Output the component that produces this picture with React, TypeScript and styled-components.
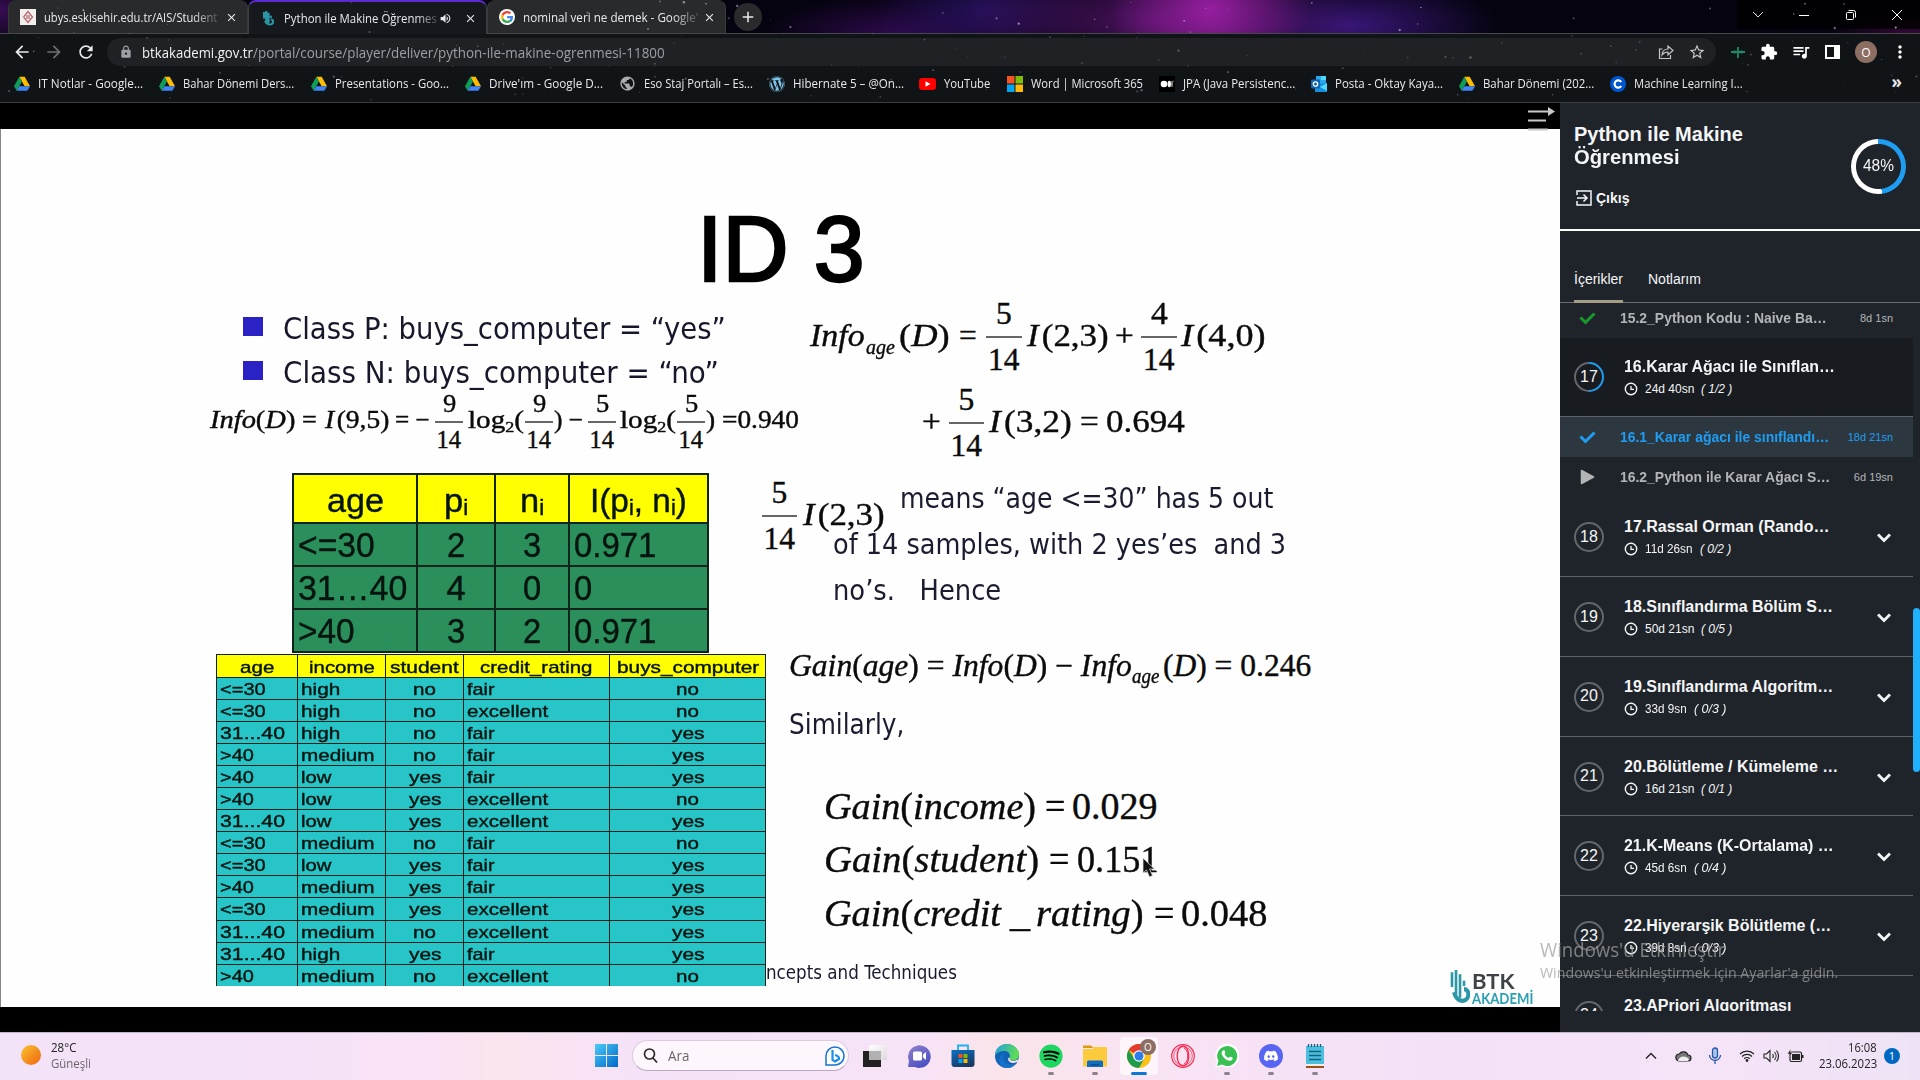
import React, { useLayoutEffect, useRef, useState } from 'react';
import styled, { createGlobalStyle } from 'styled-components';
import {
  MdArrowBack, MdArrowForward, MdRefresh, MdLock, MdStarBorder, MdExtension, MdQueueMusic,
  MdMoreVert, MdVolumeUp, MdClose, MdAdd, MdPublic,
} from 'react-icons/md';
import { FaSpotify, FaDiscord, FaWordpress } from 'react-icons/fa';

const UI = '"Open Sans", "Noto Sans", sans-serif';
const ARIAL = '"Liberation Sans", Arial, sans-serif';
const TIMES = '"Liberation Serif", "Times New Roman", serif';
const TAHOMA = '"DejaVu Sans Condensed", "DejaVu Sans", sans-serif';

const Global = createGlobalStyle`
  * { box-sizing: border-box; }
  body { margin: 0; background: #000; overflow: hidden; font-family: ${ARIAL}; }
  svg { display: block; flex: none; }
`;

/* ---------- text fitted to a fixed measure ---------- */
const FitBox = styled.span<{ $w: number }>`
  display: inline-block; flex: none; width: ${p => p.$w}px; white-space: pre; text-align: left;
`;
const FitInner = styled.span`display: inline-block; transform-origin: 0 50%;`;
function Fit({ w, children }: { w: number; children: React.ReactNode }) {
  const ref = useRef<HTMLSpanElement>(null);
  const [k, setK] = useState(1);
  useLayoutEffect(() => {
    if (ref.current) setK(w / ref.current.offsetWidth);
  }, [w]);
  return (
    <FitBox $w={w}><FitInner ref={ref} style={{ transform: `scaleX(${k})` }}>{children}</FitInner></FitBox>
  );
}

const Screen = styled.div`width: 1920px; height: 1080px; display: flex; flex-direction: column; overflow: hidden;`;

/* ---------- browser chrome ---------- */
const Browser = styled.header`
  position: relative; height: 103px; display: flex; flex-direction: column; color: #e8eaed;
  font-family: ${UI}; border-bottom: 1px solid #3c3d3f; background: #111417;
`;
const Stars = styled.svg`position: absolute; inset: 0; pointer-events: none;`;
const Strip = styled.div`
  height: 34px; display: flex; align-items: flex-start; border-bottom: 1px solid #47484b; padding-left: 8px;
  background:
    radial-gradient(ellipse 100px 80px at 1210px 10px, rgba(150,30,160,1), transparent),
    radial-gradient(ellipse 200px 60px at 1160px 20px, rgba(88,20,110,.85), transparent),
    radial-gradient(ellipse 150px 50px at 1350px 26px, rgba(62,24,130,.9), transparent),
    radial-gradient(ellipse 110px 50px at 985px 10px, rgba(40,18,100,.85), transparent),
    radial-gradient(ellipse 140px 40px at 900px 34px, rgba(50,10,84,.9), transparent),
    radial-gradient(ellipse 60px 40px at 0px 10px, rgba(60,14,90,.9), transparent),
    radial-gradient(ellipse 80px 20px at 1910px 34px, rgba(66,10,66,.8), transparent),
    #05030f;
`;
const Tab = styled.div<{ $active?: boolean; $w: number }>`
  width: ${p => p.$w}px; height: ${p => (p.$active ? 34 : 33)}px; display: flex; align-items: center;
  padding: 0 9px 0 11px; border-radius: 8px 8px 0 0; font-size: 12px;
  background: ${p => (p.$active ? '#15191d' : '#292a2b')};
  border: 1px solid ${p => (p.$active ? '#3d3e41' : '#3a3a3b')}; border-bottom: 0;
  border-top: ${p => (p.$active ? '2px solid #5b2ad0' : '1px solid #2b2b2c')};
`;
const TabText = styled.div<{ $w: number }>`
  width: ${p => p.$w}px; margin-left: 8px; overflow: hidden; flex: none;
  mask-image: linear-gradient(90deg, #000 85%, rgba(0,0,0,.15));
`;
const LeafSlot = styled.span`width: 16px; padding-left: 3px;`;
const Push = styled.div`margin-left: auto; display: flex; align-items: center; gap: 6px;`;
const NewTab = styled.div`
  width: 28px; height: 28px; margin: 3px 0 0 8px; border-radius: 50%; background: #2a2a2c;
  display: flex; align-items: center; justify-content: center;
`;
const WinButtons = styled.div`
  margin-left: auto; width: 183px; height: 29px; display: flex; align-items: center; justify-content: space-between;
  padding: 0 17px 0 15px; background: rgba(0,0,0,.75);
`;
const Toolbar = styled.div`height: 36px; display: flex; align-items: center; padding: 0 0 0 12px;`;
const NavIcons = styled.div`display: flex; gap: 12px; width: 95px; font-size: 20px;`;
const Omnibox = styled.div`
  width: 1609px; height: 28px; border-radius: 14px; background: #202124; display: flex; align-items: center;
  padding: 0 10px 0 12px; font-size: 14px; flex: none;
`;
const UrlText = styled.div`display: flex; margin-left: 9px; color: #9aa0a6;`;
const Host = styled.span`color: #f1f3f4;`;
const OmniTools = styled.div`margin-left: auto; display: flex; gap: 14px; align-items: center; color: #c4c7ca; font-size: 18px;`;
const Tools = styled.div`display: flex; align-items: center; margin-left: 13px; gap: 13px; font-size: 20px; color: #fff;`;
const Avatar = styled.div`
  width: 22px; height: 22px; border-radius: 50%; background: #8d6e63; color: #fff; font-size: 12px;
  display: flex; align-items: center; justify-content: center;
`;
const Bookmarks = styled.div`height: 32px; display: flex; align-items: center; padding: 0 0 5px 14px; font-size: 12px;`;
const Bookmark = styled.div<{ $gap: number }>`display: flex; align-items: center; gap: 8px; margin-right: ${p => p.$gap}px; flex: none;`;
const More = styled.div`margin: -4px 18px 0 auto; font-size: 17px; font-weight: 700;`;

const stars = Array.from({ length: 150 }, (_, i) => {
  const r = (n: number) => { const v = Math.sin(i * 12.9898 + n * 78.233) * 43758.5453; return v - Math.floor(v); };
  return { x: r(1) * 1920, y: r(2) * 100, s: 0.4 + r(3) * 0.8, o: 0.25 + r(4) * 0.55 };
});

const Drive = () => (
  <svg width="16" height="15" viewBox="0 0 24 22">
    <path d="M8 1h8l8 14h-8z" fill="#fbbc04" /><path d="M8 1l4 7-8 14-4-7z" fill="#0f9d58" />
    <path d="M8 15h16l-4 7H4z" fill="#4285f4" />
  </svg>
);
const Microsoft = () => (
  <svg width="16" height="16" viewBox="0 0 16 16">
    <path d="M0 0h7.5v7.5H0z" fill="#f35325" /><path d="M8.5 0H16v7.5H8.5z" fill="#81bc06" />
    <path d="M0 8.500h7.500V16H0z" fill="#05a6f0" /><path d="M8.500 8.500H16V16H8.500z" fill="#ffba08" />
  </svg>
);
const YouTube = () => (
  <svg width="17" height="12" viewBox="0 0 17 12"><rect width="17" height="12" rx="3" fill="#f00" /><path d="M6.500 3.200v5.600L11.500 6z" fill="#fff" /></svg>
);
const Medium = () => (
  <svg width="16" height="16" viewBox="0 0 16 16"><path d="M0 0h16v16H0z" fill="#000" /><circle cx="5" cy="8" r="3.300" fill="#fff" /><ellipse cx="10.300" cy="8" rx="1.700" ry="3.200" fill="#fff" /><path d="M13 5.200v5.600" stroke="#fff" /></svg>
);
const Outlook = () => (
  <svg width="16" height="16" viewBox="0 0 16 16"><path d="M5 0h10v8H5z" fill="#28a8ea" /><path d="M10 0h5v4h-5z" fill="#50d9ff" /><path d="M4 8l12-1v9H4z" fill="#1490df" /><path d="M16 7v8l-7-4z" fill="#50d9ff" /><rect y="3.500" width="9" height="9" rx="1" fill="#0f64b5" /><circle cx="4.500" cy="8" r="2.200" fill="none" stroke="#fff" strokeWidth="1.300" /></svg>
);
const Coursera = () => (
  <svg width="16" height="16" viewBox="0 0 16 16"><circle cx="8" cy="8" r="8" fill="#0056d2" /><path d="M11.200 6A3.600 3.600 0 1 0 11.200 10" fill="none" stroke="#fff" strokeWidth="2.200" /></svg>
);
const Google = () => (
  <svg width="16" height="16" viewBox="0 0 48 48"><circle cx="24" cy="24" r="24" fill="#fff" />
    <path fill="#4285f4" d="M42 24.500c0-1.500-.1-2.600-.4-3.800H24.400v7h10c-.2 1.700-1.300 4.300-3.700 6l5.700 4.500c3.400-3.200 5.600-7.900 5.600-13.700z" />
    <path fill="#34a853" d="M24.400 42c4.900 0 9.100-1.600 12-4.400l-5.700-4.400c-1.500 1.100-3.600 1.800-6.300 1.800-4.800 0-8.800-3.200-10.300-7.500l-6 4.600C11 38.100 17.200 42 24.400 42z" />
    <path fill="#fbbc05" d="M14.100 27.500c-.4-1.100-.6-2.300-.6-3.500s.2-2.400.6-3.500l-6-4.600c-1.300 2.400-2 5.200-2 8.100s.7 5.700 2 8.100z" />
    <path fill="#ea4335" d="M24.400 13c3.400 0 5.700 1.500 7 2.700l5.100-5C33.400 7.800 29.300 6 24.400 6c-7.200 0-13.400 4.100-16.300 10l6 4.600c1.500-4.400 5.500-7.600 10.300-7.600z" />
  </svg>
);
const Crest = () => (
  <svg width="16" height="16" viewBox="0 0 16 16"><path d="M0 0h16v16H0z" fill="#f1efee" /><path d="M8 2.500l4.500 5.500L8 13.500 3.500 8z" fill="none" stroke="#b5656b" strokeWidth="1.300" /><path d="M6 7h4M6 9h4" stroke="#a8434b" /></svg>
);
const Leaf = ({ w, h, thick }: { w: number; h: number; thick?: boolean }) => (
  <svg width={w} height={h} viewBox="0 0 20 34" preserveAspectRatio="none">
    <g fill="none" stroke="#2b97a6" strokeWidth={thick ? 4 : 2.600}>
      <path d="M2 4v14M6 2v24M10 6v22" /><path d="M14 12v5" /><path d="M14 20c6 0 6 10-1 11-5 0-8-4-9-8" strokeWidth="4" />
    </g>
  </svg>
);

const bookmarks: [React.ReactNode, string, number, number][] = [
  [<Drive />, 'IT Notlar - Google...', 105, 16], [<Drive />, 'Bahar Dönemi Ders...', 111, 17],
  [<Drive />, 'Presentations - Goo...', 114, 16], [<Drive />, "Drive'ım - Google D...", 114, 16],
  [<MdPublic size={17} color="#a9abb0" />, 'Eso Staj Portalı – Es...', 109, 16],
  [<FaWordpress size={16} color="#7cc3ea" />, 'Hibernate 5 – @On...', 111, 15],
  [<YouTube />, 'YouTube', 46, 17], [<Microsoft />, 'Word | Microsoft 365', 112, 16],
  [<Medium />, 'JPA (Java Persistenc...', 112, 16], [<Outlook />, 'Posta - Oktay Kaya...', 108, 16],
  [<Drive />, 'Bahar Dönemi (202...', 111, 16], [<Coursera />, 'Machine Learning I...', 109, 0],
];

function BrowserChrome() {
  return (
    <Browser>
      <Strip>
        <Tab $w={240}><Crest /><TabText $w={175}><Fit w={173}>ubys.eskisehir.edu.tr/AIS/Student</Fit></TabText><Push><MdClose size={13} /></Push></Tab>
        <Tab $w={239} $active><LeafSlot><Leaf w={11} h={16} thick /></LeafSlot><TabText $w={155}><Fit w={153}>Python ile Makine Öğrenmes</Fit></TabText><Push><MdVolumeUp size={13} /><i /><MdClose size={13} /></Push></Tab>
        <Tab $w={239}><Google /><TabText $w={176}><Fit w={175}>nominal veri ne demek - Google'</Fit></TabText><Push><MdClose size={13} /></Push></Tab>
        <NewTab><MdAdd size={18} /></NewTab>
        <WinButtons>
          <svg width="12" height="12" viewBox="0 0 12 12"><path d="M1 3l5 5 5-5" fill="none" stroke="#ddd" /></svg>
          <svg width="12" height="12" viewBox="0 0 12 12"><path d="M1 6.500h10" stroke="#fff" /></svg>
          <svg width="12" height="12" viewBox="0 0 12 12"><rect x="1.500" y="3.500" width="7" height="7" rx="1" fill="none" stroke="#fff" /><path d="M3.500 1.500h5a2 2 0 0 1 2 2v5" fill="none" stroke="#fff" /></svg>
          <svg width="12" height="12" viewBox="0 0 12 12"><path d="M1 1l10 10M11 1L1 11" stroke="#fff" /></svg>
        </WinButtons>
      </Strip>
      <Toolbar>
        <NavIcons><MdArrowBack /><MdArrowForward color="#6d7073" /><MdRefresh /></NavIcons>
        <Omnibox>
          <MdLock size={14} color="#9aa0a6" />
          <UrlText><Host><Fit w={111}>btkakademi.gov.tr</Fit></Host><Fit w={412}>/portal/course/player/deliver/python-ile-makine-ogrenmesi-11800</Fit></UrlText>
          <OmniTools>
            <svg width="16" height="16" viewBox="0 0 16 16" fill="none" stroke="#c4c7ca" strokeWidth="1.200"><path d="M4.500 5H1.500v9.500h11V11" /><path d="M4 11c.5-4 3-6 6-6V2l5 4.500-5 4.500V8C7.500 8 5.500 9 4 11z" /></svg>
            <MdStarBorder />
          </OmniTools>
        </Omnibox>
        <Tools>
          <svg width="18" height="18" viewBox="0 0 18 18" stroke="#1f8a68" strokeWidth="1.800"><path d="M9 4v11M2 9h14M5.500 7.500v3M12.500 7.500v3" /></svg>
          <MdExtension size={18} /><MdQueueMusic />
          <svg width="18" height="16" viewBox="0 0 18 16"><rect x="2" y="2" width="13" height="12" fill="none" stroke="#fff" strokeWidth="2" /><path d="M10 2h5v12h-5z" fill="#fff" /></svg>
          <Avatar>O</Avatar><MdMoreVert />
        </Tools>
      </Toolbar>
      <Bookmarks>
        {bookmarks.map(([icon, text, w, gap], i) => (
          <Bookmark key={i} $gap={gap}>{icon}<Fit w={w}>{text}</Fit></Bookmark>
        ))}
        <More>»</More>
      </Bookmarks>
      <Stars width="1920" height="103">
        {stars.map((s, i) => <circle key={i} cx={s.x} cy={s.y} r={s.s} fill="#cfc5e8" opacity={s.y > 32 ? s.o * 0.5 : s.o} />)}
      </Stars>
    </Browser>
  );
}

/* ---------- slide ---------- */
const Main = styled.main`height: 929px; display: flex;`;
const Player = styled.section`position: relative; width: 1560px; height: 929px; padding: 26px 0 25px; background: #000;`;
const Menu = styled.svg`position: absolute; right: 4px; top: 2px;`;
const Slide = styled.div`height: 878px; background: #fefefe; border-left: 1px solid #888; color: #0b0b0b;`;
const Title = styled.div`
  padding: 70px 0 0 696px; height: 171px; font: 92px/100px ${ARIAL}; color: #000; -webkit-text-stroke: 2.500px #000;
`;
const Columns = styled.div`display: grid; grid-template-columns: 764px 1fr; align-items: start;`;
const Column = styled.div`display: flex; flex-direction: column;`;
const Bullet = styled.div`
  height: 44px; display: flex; align-items: center; padding-left: 242px; gap: 20px;
  font: 30px/44px ${TAHOMA}; color: #17172b;
  &:first-child { margin-top: 5px; }
  &::before { content: ''; width: 20px; height: 19px; background: #2a22c4; flex: none; margin-bottom: 2px; }
`;
const BulletText = styled.span`padding-top: 3px;`;
const Row = styled.div<{ $gap: number; $h: number; $size: number }>`
  margin-top: ${p => p.$gap}px; height: ${p => p.$h}px; display: flex; align-items: center;
  font-family: ${TIMES}; font-size: ${p => p.$size}px; line-height: 1; -webkit-text-stroke: .4px currentColor;
`;
const Part = styled.span<{ $ml: number; $shift: number; $size?: number }>`
  margin-left: ${p => p.$ml}px; flex: none; display: block;
  margin-top: ${p => Math.max(0, p.$shift * 2)}px; margin-bottom: ${p => Math.max(0, -p.$shift * 2)}px;
  ${p => p.$size && `font-size: ${p.$size}px;`}
  sub { font-size: .62em; line-height: 0; vertical-align: -.28em; }
`;
const Fraction = styled.span<{ $ml: number; $w: number; $n: number }>`
  margin-left: ${p => p.$ml}px; width: ${p => p.$w}px; flex: none; display: flex; flex-direction: column;
  align-items: center; line-height: ${p => p.$n}px;
  &::before { content: ''; order: 1; width: 100%; height: 2px; background: #666; }
  & > :last-child { order: 2; }
`;
const Var = styled.i`margin-right: .09em;`;
type Seg = { x: number; w: number; t?: React.ReactNode; frac?: [string, string, number, number]; size?: number; shift?: number };
function Formula({ from, gap, h, size, segs, n = 44, shift = -1 }: { from: number; gap: number; h: number; size: number; segs: Seg[]; n?: number; shift?: number }) {
  return (
    <Row $gap={gap} $h={h} $size={size}>
      {segs.map((s, i) => {
        const end = i ? segs[i - 1].x + segs[i - 1].w : from;
        return s.frac ? (
          <Fraction key={i} $ml={s.x - end} $w={s.w} $n={n}><Fit w={s.frac[2]}>{s.frac[0]}</Fit><Fit w={s.frac[3]}>{s.frac[1]}</Fit></Fraction>
        ) : (
          <Part key={i} $ml={s.x - end} $shift={s.shift ?? shift} $size={s.size}><Fit w={s.w}>{s.t}</Fit></Part>
        );
      })}
    </Row>
  );
}
const Prose = styled.div<{ $gap: number; $size: number; $lh: number; $ml: number }>`
  margin: ${p => p.$gap}px 0 0 ${p => p.$ml}px; display: flex; flex-direction: column; align-items: flex-start;
  font: ${p => p.$size}px/${p => p.$lh}px ${TAHOMA}; color: #1b1b30;
`;
const FirstLine = styled.div`padding-left: 67px;`;

const Grid = styled.div<{ $cols: string; $gap: number; $ml: number; $w: number; $bg: string; $line: number }>`
  margin: ${p => p.$gap}px 0 0 ${p => p.$ml}px; width: ${p => p.$w}px; display: grid;
  grid-template-columns: ${p => p.$cols}; background: ${p => p.$bg};
  border: solid #10241c; border-width: ${p => p.$line}px 0 0 ${p => p.$line}px; color: #06140f;
`;
const Cell = styled.div<{ $h: number; $line: number; $size: number; $head?: boolean; $center?: boolean; $pad: number; $last?: boolean; $drop?: number }>`
  height: ${p => p.$h}px; border: solid #10241c; border-width: 0 ${p => p.$line}px ${p => (p.$last ? 0 : p.$line)}px 0;
  display: flex; align-items: center; justify-content: ${p => (p.$center ? 'center' : 'flex-start')};
  padding-left: ${p => (p.$center ? 0 : p.$pad)}px; padding-top: ${p => p.$drop ?? 0}px; background: ${p => (p.$head ? '#ff0' : 'transparent')};
  font: ${p => p.$size}px/1 ${ARIAL}; -webkit-text-stroke: .4px currentColor;
  sub { font-size: .66em; line-height: 0; vertical-align: -.12em; }
`;
const gainRows: [React.ReactNode, number][][] = [
  [['<=30', 77], ['2', 18], ['3', 18], ['0.971', 82]],
  [['31…40', 109], ['4', 19], ['0', 18], ['0', 18]],
  [['>40', 57], ['3', 18], ['2', 18], ['0.971', 82]],
];
const wordWidth: Record<string, number> = {
  '<=30': 46, '31...40': 65, '>40': 34, high: 39, low: 31, medium: 73, no: 23, yes: 32, fair: 28, excellent: 81,
  age: 34, income: 66, student: 69, credit_rating: 113, buys_computer: 142,
};
const samples = [
  '<=30 high no fair no', '<=30 high no excellent no', '31...40 high no fair yes', '>40 medium no fair yes',
  '>40 low yes fair yes', '>40 low yes excellent no', '31...40 low yes excellent yes', '<=30 medium no fair no',
  '<=30 low yes fair yes', '>40 medium yes fair yes', '<=30 medium yes excellent yes',
  '31...40 medium no excellent yes', '31...40 high yes fair yes', '>40 medium no excellent no',
].map(r => r.split(' '));

const Logo = styled.div`position: absolute; left: 1450px; top: 865px; display: flex; gap: 2px;`;
const LogoText = styled.div`
  display: flex; flex-direction: column; padding-top: 4px; font-family: Lato, ${UI}; font-weight: 700; color: #3f4348;
  font-size: 21px; line-height: 18px;
`;
const LogoSub = styled.span`font-size: 16px; line-height: 15px; color: #2b9fb3;`;
const Pointer = styled.svg`position: absolute; left: 1142px; top: 754px;`;

function SlideView() {
  const I = (t: string) => <><Var>I</Var>{t}</>;
  return (
    <Player>
      <Slide>
        <Title><Fit w={168}>ID 3</Fit></Title>
        <Columns>
          <Column>
            <Bullet><BulletText><Fit w={443}>Class P: buys_computer = “yes”</Fit></BulletText></Bullet>
            <Bullet><BulletText><Fit w={436}>Class N: buys_computer = “no”</Fit></BulletText></Bullet>
            <Formula from={1} gap={-6} h={70} size={24.5} n={34} shift={-1.5} segs={[
              { x: 210, w: 86, t: <><i>Info</i>(<i>D</i>)</> }, { x: 302, w: 15, t: '=' },
              { x: 325, w: 64, t: I('(9,5)') }, { x: 395, w: 35, t: '= −' },
              { x: 435, w: 28, frac: ['9', '14', 13, 25] }, { x: 468, w: 56, t: <>log<sub>2</sub>(</> },
              { x: 525, w: 28, frac: ['9', '14', 13, 25] }, { x: 554, w: 29, t: ') −' },
              { x: 588, w: 28, frac: ['5', '14', 13, 25] }, { x: 620, w: 56, t: <>log<sub>2</sub>(</> },
              { x: 677, w: 28, frac: ['5', '14', 13, 25] }, { x: 706, w: 9, t: ')' }, { x: 722, w: 77, t: '=0.940' },
            ]} />
            <Grid $cols="124px 78px 74px 1fr" $gap={16} $ml={291} $w={417} $bg="#2b8f5b" $line={2}>
              {([['age', 57], [<>p<sub>i</sub></>, 24], [<>n<sub>i</sub></>, 24], [<>I(p<sub>i</sub>, n<sub>i</sub>)</>, 97]] as [React.ReactNode, number][]).map(([t, w], i) => (
                <Cell key={i} $h={49} $line={2} $size={33} $head $center $pad={5} $drop={4}><Fit w={w}>{t}</Fit></Cell>
              ))}
              {gainRows.flatMap((r, j) => r.map(([t, w], i) => (
                <Cell key={`${j}-${i}`} $h={43} $line={2} $size={34.5} $center={i === 1 || i === 2} $pad={4} $drop={2}><Fit w={w}>{t}</Fit></Cell>
              )))}
            </Grid>
            <Grid $cols="81px 88px 78px 146px 1fr" $gap={1} $ml={215} $w={550} $bg="#27c4c8" $line={1.5}>
              {['age', 'income', 'student', 'credit_rating', 'buys_computer'].map(t => (
                <Cell key={t} $h={23} $line={1.5} $size={17} $head $center $pad={3} $drop={2}><Fit w={wordWidth[t]}>{t}</Fit></Cell>
              ))}
              {samples.flatMap((r, j) => r.map((t, i) => (
                <Cell key={`${j}-${i}`} $h={j === 13 ? 21 : 22.05} $line={1.5} $size={17} $center={i === 2 || i === 4} $pad={i === 0 ? 3 : 3} $drop={2} $last={j === 13}><Fit w={wordWidth[t]}>{t}</Fit></Cell>
              )))}
            </Grid>
          </Column>
          <Column>
            <Formula from={765} gap={-8} h={90} size={31.5} segs={[
              { x: 810, w: 55, t: <i>Info</i> }, { x: 866, w: 29, t: <i>age</i>, size: 22, shift: 10 },
              { x: 899, w: 51, t: <>(<i>D</i>)</> }, { x: 959, w: 18, t: '=' },
              { x: 986, w: 36, frac: ['5', '14', 16, 32] }, { x: 1027, w: 82, t: I('(2,3)') }, { x: 1115, w: 19, t: '+' },
              { x: 1141, w: 36, frac: ['4', '14', 17, 32] }, { x: 1181, w: 85, t: I('(4,0)') },
            ]} />
            <Formula from={765} gap={-4} h={90} size={31.5} segs={[
              { x: 922, w: 19, t: '+' }, { x: 949, w: 35, frac: ['5', '14', 16, 32] },
              { x: 989, w: 83, t: I('(3,2)') }, { x: 1080, w: 19, t: '=' }, { x: 1106, w: 79, t: '0.694' },
            ]} />
            <Formula from={765} gap={3} h={90} size={31.5} segs={[
              { x: 762, w: 35, frac: ['5', '14', 16, 32] }, { x: 803, w: 82, t: I('(2,3)') },
            ]} />
            <Prose $gap={-85} $size={28.5} $lh={46} $ml={68}>
              <FirstLine><Fit w={373}>means “age &lt;=30” has 5 out</Fit></FirstLine>
              <Fit w={453}>of 14 samples, with 2 yes’es  and 3</Fit>
              <Fit w={168}>no’s.   Hence</Fit>
            </Prose>
            <Formula from={765} gap={31} h={40} size={31.5} shift={.3} segs={[
              { x: 789, w: 343, t: <><i>Gain</i>(<i>age</i>) = <i>Info</i>(<i>D</i>) − <i>Info</i></> },
              { x: 1132, w: 27, t: <i>age</i>, size: 21, shift: 11 }, { x: 1163, w: 148, t: <>(<i>D</i>) = 0.246</> },
            ]} />
            <Prose $gap={19} $size={29} $lh={40} $ml={24}><Fit w={115}>Similarly,</Fit></Prose>
            <Formula from={765} gap={35} h={53.5} size={38} shift={0} segs={[
              { x: 824, w: 212, t: <><i>Gain</i>(<i>income</i>)</> }, { x: 1045, w: 20, t: '=' }, { x: 1072, w: 86, t: '0.029' },
            ]} />
            <Formula from={765} gap={0} h={53.5} size={38} shift={0} segs={[
              { x: 824, w: 215, t: <><i>Gain</i>(<i>student</i>)</> }, { x: 1049, w: 20, t: '=' }, { x: 1077, w: 82, t: '0.151' },
            ]} />
            <Formula from={765} gap={0} h={53.5} size={38} shift={0} segs={[
              { x: 824, w: 177, t: <><i>Gain</i>(<i>credit</i></> }, { x: 1010, w: 20, t: '_' }, { x: 1036, w: 108, t: <><i>rating</i>)</> },
              { x: 1154, w: 20, t: '=' }, { x: 1181, w: 87, t: '0.048' },
            ]} />
            <Prose $gap={17} $size={19} $lh={30} $ml={1}><Fit w={191}>ncepts and Techniques</Fit></Prose>
          </Column>
        </Columns>
      </Slide>
      <Pointer width="14" height="22" viewBox="0 0 14 22"><path d="M1 1v15l3.500-3 3 7 3-1.500-3-6.500h5z" fill="#111" stroke="#ddd" strokeWidth=".8" /></Pointer>
      <Logo><Leaf w={20} h={36} /><LogoText><Fit w={43}>BTK</Fit><LogoSub><Fit w={61}>AKADEMİ</Fit></LogoSub></LogoText></Logo>
      <Menu width="28" height="26" viewBox="0 0 28 26"><path d="M0 6.500h22M0 15.500h18M0 24.500h20" stroke="#c9c9c9" strokeWidth="2" /><path d="M20 2l7 4.500-7 4.500z" fill="#c9c9c9" /></Menu>
    </Player>
  );
}

/* ---------- course sidebar ---------- */
const Side = styled.aside`width: 360px; height: 929px; background: #1f242b; color: #f4f5f6; display: flex; flex-direction: column; font-family: ${ARIAL};`;
const CourseHead = styled.div`height: 128px; border-bottom: 2px solid #fff; display: flex; justify-content: space-between; padding: 20px 14px 0 14px;`;
const CourseName = styled.div`font: 700 20px/23px ${ARIAL};`;
const Exit = styled.div`margin-top: 21px; padding-left: 2px; display: flex; align-items: center; gap: 4px; font: 700 14px/16px ${ARIAL};`;
const Ring = styled.div`
  width: 55px; height: 55px; margin-top: 16px; border-radius: 50%; display: flex; align-items: center; justify-content: center; padding-bottom: 2px;
  font-size: 16px; background: radial-gradient(circle, #1f242b 22px, transparent 23px), conic-gradient(#1f9df2 48%, #fff 0);
`;
const Tabs = styled.div`height: 72px; border-bottom: 1px solid #686b6f; display: flex; gap: 25px; padding: 36px 0 0 14px; font-size: 14px; flex: none;`;
const SideTab = styled.div<{ $on?: boolean }>`
  height: 36px; line-height: 24px; border-bottom: 3px solid ${p => (p.$on ? '#a59d86' : 'transparent')};
`;
const ListWrap = styled.div`height: 708px; display: flex; overflow: hidden; flex: none;`;
const List = styled.div`width: 353px; display: flex; flex-direction: column;`;
const Track = styled.div`width: 7px; padding-top: 305px;`;
const Thumb = styled.div`height: 164px; border-radius: 4px; background: #1fb1fb;`;
const Lesson = styled.div<{ $h: number; $on?: boolean; $up?: number }>`
  height: ${p => p.$h}px; flex: none; display: flex; align-items: center; padding: 0 20px ${p => p.$up ?? 0}px 19px;
  font: 700 14px/16px ${ARIAL}; color: ${p => (p.$on ? '#1f9df2' : '#b3b4b6')};
  background: ${p => (p.$on ? '#2c373f' : 'transparent')};
`;
const LessonName = styled.div`margin-left: 24px;`;
const Duration = styled.div`margin-left: auto; font: 11px/16px ${ARIAL};`;
const Chapter = styled.div<{ $h: number; $open?: boolean }>`
  height: ${p => p.$h}px; flex: none; display: flex; align-items: flex-start; padding: 0 21px 0 14px;
  padding-top: ${p => (p.$open ? 19 : 20)}px; border-bottom: 1px solid #5f6266; background: ${p => (p.$open ? '#181b1f' : 'transparent')};
`;
const Num = styled.div<{ $half?: boolean }>`
  width: 30px; height: 30px; margin-top: 5px; border-radius: 50%; display: flex; align-items: center; justify-content: center; font-size: 16px;
  padding-bottom: 1px;
  background: radial-gradient(circle, ${p => (p.$half ? '#181b1f' : '#1f242b')} 12.500px, transparent 13.500px),
    conic-gradient(${p => (p.$half ? '#1f9df2' : '#64676b')} 50%, #64676b 0);
`;
const ChapterText = styled.div`margin-left: 20px; display: flex; flex-direction: column; font: 700 16px/20px ${ARIAL};`;
const Meta = styled.div`display: flex; align-items: center; height: 24px; font: 12px/14px ${ARIAL}; i { margin-left: 7px; }`;
const Clock = () => <svg width="14" height="14" viewBox="0 0 14 14"><circle cx="7" cy="7" r="5.700" fill="none" stroke="#f4f5f6" strokeWidth="1.400" /><path d="M7 4v3.300h3" fill="none" stroke="#f4f5f6" strokeWidth="1.300" /></svg>;
const ClockGap = styled.span`width: 7px;`;
const Caret = styled.div`margin: 15px 0 0 auto;`;
const Check = ({ c }: { c: string }) => <svg width="17" height="14" viewBox="0 0 17 14"><path d="M1.500 6.500L6.500 11.500 15.500 2.500" fill="none" stroke={c} strokeWidth="3" /></svg>;

const chapters: [number, string, number, string, number, string, number][] = [
  [18, '17.Rassal Orman (Rando…', 205, '11d 26sn', 48, '( 0/2 )', 31],
  [19, '18.Sınıflandırma Bölüm S…', 209, '50d 21sn', 49, '( 0/5 )', 31],
  [20, '19.Sınıflandırma Algoritm…', 209, '33d 9sn', 42, '( 0/3 )', 32],
  [21, '20.Bölütleme / Kümeleme …', 214, '16d 21sn', 49, '( 0/1 )', 31],
  [22, '21.K-Means (K-Ortalama) …', 210, '45d 6sn', 42, '( 0/4 )', 32],
  [23, '22.Hiyerarşik Bölütleme (…', 207, '39d 8sn', 42, '( 0/3 )', 32],
];

function ChapterRow({ n, title, w, h, open, children }: { n: number; title: string; w: number; h: number; open?: boolean; children?: React.ReactNode }) {
  return (
    <Chapter $h={h} $open={open}>
      <Num $half={open}>{n}</Num>
      <ChapterText><Fit w={w}>{title}</Fit>{children && <Meta><Clock /><ClockGap />{children}</Meta>}</ChapterText>
      {!open && children && <Caret><svg width="16" height="12" viewBox="0 0 16 12"><path d="M2 2.500l6 6 6-6" fill="none" stroke="#f4f5f6" strokeWidth="2.800" /></svg></Caret>}
    </Chapter>
  );
}

function Sidebar() {
  return (
    <Side>
      <CourseHead>
        <div>
          <CourseName><Fit w={169}>Python ile Makine</Fit><br /><Fit w={105}>Öğrenmesi</Fit></CourseName>
          <Exit>
            <svg width="16" height="16" viewBox="0 0 16 16" fill="none" stroke="#f4f5f6" strokeWidth="1.500"><path d="M1 5V1h14v14H1v-4M1 8h9M7.500 4.500L11 8l-3.500 3.500" /></svg>
            <Fit w={33}>Çıkış</Fit>
          </Exit>
        </div>
        <Ring><Fit w={31}>48%</Fit></Ring>
      </CourseHead>
      <Tabs><SideTab $on><Fit w={49}>İçerikler</Fit></SideTab><SideTab><Fit w={53}>Notlarım</Fit></SideTab></Tabs>
      <ListWrap>
        <List>
          <Lesson $h={35} $up={6}><Check c="#159a2b" /><LessonName><Fit w={207}>15.2_Python Kodu : Naive Ba…</Fit></LessonName><Duration>8d 1sn</Duration></Lesson>
          <ChapterRow n={17} h={79} w={211} title="16.Karar Ağacı ile Sınıflan…" open><Fit w={49}>24d 40sn</Fit><i><Fit w={31}>( 1/2 )</Fit></i></ChapterRow>
          <Lesson $h={40} $on><Check c="#1f9df2" /><LessonName><Fit w={209}>16.1_Karar ağacı ile sınıflandı…</Fit></LessonName><Duration>18d 21sn</Duration></Lesson>
          <Lesson $h={40}><svg width="17" height="16" viewBox="0 0 17 16"><path d="M2.500 1.500v13l12-6.500z" fill="#b3b4b6" stroke="#b3b4b6" strokeWidth="1.500" strokeLinejoin="round" /></svg><LessonName><Fit w={210}>16.2_Python ile Karar Ağacı S…</Fit></LessonName><Duration>6d 19sn</Duration></Lesson>
          {chapters.map(([n, t, w, d, dw, c, cw]) => (
            <ChapterRow key={n} n={n} h={n === 18 ? 80 : 79.8} w={w} title={t}><Fit w={dw}>{d}</Fit><i><Fit w={cw}>{c}</Fit></i></ChapterRow>
          ))}
          <ChapterRow n={24} h={79.8} w={167} title="23.APriori Algoritması" />
        </List>
        <Track><Thumb /></Track>
      </ListWrap>
    </Side>
  );
}

/* ---------- activation notice over the desktop ---------- */
const Notice = styled.div`
  position: absolute; left: 1540px; top: 937px; color: rgba(160,160,160,.75); font: 20px/26px ${UI};
  display: flex; flex-direction: column;
`;
const NoticeSub = styled.span`font-size: 14.500px; line-height: 20px;`;

/* ---------- taskbar ---------- */
const Taskbar = styled.footer`
  height: 48px; border-top: 1px solid #c3b6c6; display: flex; align-items: center; font-family: ${UI}; font-size: 12px; color: #222; padding: 0 20px 2px;
  background: linear-gradient(90deg, #f3e3f8 0%, #f5e2f8 15%, #f8e2f5 22%, #fae4ee 26%, #f6e2f8 33%, #f7e3f6 48%, #fae4ea 52%, #f8e3f3 60%, #f4e1f8 75%, #f5e3f8 90%, #eee3f6 100%);
`;
const Weather = styled.div`width: 575px; display: flex; gap: 10px; line-height: 16px; padding-left: 1px;`;
const Sun = styled.div`width: 20px; height: 20px; margin-top: 5px; border-radius: 50%; background: linear-gradient(135deg, #f8c331, #f0640f);`;
const Stack = styled.div<{ $right?: boolean }>`display: flex; flex-direction: column; align-items: ${p => (p.$right ? 'flex-end' : 'flex-start')}; line-height: 16px;`;
const Muted = styled.span`color: #6a646d;`;
const SearchBox = styled.div`
  width: 217px; height: 31px; margin: 0 7px 0 14px; border-radius: 16px; background: #fdf6fc; border: 1px solid #dccbdc; border-bottom-color: #bba9bd;
  display: flex; align-items: center; padding: 0 2px 0 10px; gap: 10px; font-size: 14px; color: #666;
`;
const Apps = styled.div`display: flex; gap: 6px;`;
const AppSlot = styled.div<{ $mark?: 'dot' | 'bar' }>`
  position: relative; width: 38px; height: 38px; border-radius: 4px; display: flex; align-items: center; justify-content: center;
  background: ${p => (p.$mark === 'bar' ? 'rgba(255,255,255,.65)' : 'transparent')};
  &::after {
    content: ''; position: absolute; bottom: 0; height: 3px; border-radius: 2px; width: ${p => (p.$mark === 'bar' ? 16 : 6)}px;
    background: ${p => (p.$mark === 'bar' ? '#0a78d4' : p.$mark === 'dot' ? '#8b828d' : 'transparent')};
  }
`;
const AppBadge = styled.span`position: absolute; right: 2px; top: 2px; width: 16px; height: 16px; border-radius: 50%; background: #8d6e63; color: #fff; font-size: 10px; line-height: 16px; text-align: center;`;
const Tray = styled.div`margin-left: auto; display: flex; align-items: center;`;
const TrayIcon = styled.div<{ $w: number }>`width: ${p => p.$w}px; display: flex; justify-content: center;`;
const Spacer = styled.span`width: 8px;`;
const Count = styled.div`width: 16px; height: 16px; margin: 0 0 0 7px; border-radius: 50%; background: #0067c0; color: #fff; font-size: 11px; line-height: 16px; text-align: center;`;

function TaskbarView() {
  return (
    <Taskbar>
      <Weather><Sun /><Stack><Fit w={25}>28°C</Fit><Muted><Fit w={40}>Güneşli</Fit></Muted></Stack></Weather>
      <svg width="23" height="23" viewBox="0 0 23 23"><defs><linearGradient id="win" x2="1" y2="1"><stop stopColor="#4ccbf7" /><stop offset="1" stopColor="#0067c8" /></linearGradient></defs><path d="M0 0h11v11H0zM12 0h11v11H12zM0 12h11v11H0zM12 12h11v11H12z" fill="url(#win)" /></svg>
      <SearchBox>
        <svg width="15" height="15" viewBox="0 0 15 15" fill="none" stroke="#2a2a2a" strokeWidth="1.700"><circle cx="6.500" cy="6" r="5" /><path d="M10 10l4 4.500" /></svg>
        <Fit w={21}>Ara</Fit>
        <Push><svg width="22" height="22" viewBox="0 0 22 22"><path d="M2 20V11a9 9 0 1 1 9 9z" fill="#fff" stroke="#1574d4" strokeWidth="1.500" /><path d="M8.500 5v10l2.500 1.500 4-2.500c.5-2-.5-3-4-4" fill="none" stroke="#1b8fe6" strokeWidth="2.200" /></svg></Push>
      </SearchBox>
      <Apps>
        <AppSlot><svg width="24" height="24" viewBox="0 0 24 24"><defs><linearGradient id="tv" x2="1" y2="1"><stop stopColor="#fff" /><stop offset="1" stopColor="#ddd8dd" /></linearGradient></defs><path d="M0 7h18v16H0z" fill="#222" /><path d="M6 1h18v15H6z" fill="url(#tv)" /><path d="M6 7h12v9H6z" fill="#b3b0b3" /></svg></AppSlot>
        <AppSlot><svg width="24" height="24" viewBox="0 0 24 24"><defs><linearGradient id="ch" x2=".6" y2="1"><stop stopColor="#9184c8" /><stop offset="1" stopColor="#4b4fc4" /></linearGradient></defs><path d="M1 23l1-6A11.300 11.300 0 1 1 8 23z" fill="url(#ch)" /><rect x="6" y="7.500" width="9" height="9" rx="1.500" fill="#fff" /><path d="M16 10.500l3-2.500v8l-3-2.500z" fill="#fff" /></svg></AppSlot>
        <AppSlot><svg width="24" height="24" viewBox="0 0 24 24"><defs><linearGradient id="st" y2="1" x2=".5"><stop stopColor="#0c72c4" /><stop offset="1" stopColor="#173a66" /></linearGradient></defs><path d="M7 7V1.500h10V7" fill="none" stroke="#1fb2f0" strokeWidth="1.800" /><path d="M.5 6h23v14a3 3 0 0 1-3 3h-17a3 3 0 0 1-3-3z" fill="url(#st)" /><path d="M7.500 10h4v4h-4z" fill="#f25022" /><path d="M12.500 10h4v4h-4z" fill="#7fba00" /><path d="M7.500 15h4v4h-4z" fill="#00a4ef" /><path d="M12.500 15h4v4h-4z" fill="#ffb900" /></svg></AppSlot>
        <AppSlot><svg width="24" height="24" viewBox="0 0 24 24"><defs><linearGradient id="eg" x2="1" y2=".3"><stop stopColor="#1fa0e0" /><stop offset="1" stopColor="#5fdc55" /></linearGradient></defs><circle cx="12" cy="12" r="12" fill="#0f62b4" /><path d="M0 12C0 5 5 0 12 0c8 0 12 6 12 10.500 0 4-3 6-6 6-3.500 0-4.500-1.500-3.500-2.800C16 10 13 7 9.500 7 5 7 1 9 0 12z" fill="url(#eg)" /><path d="M15 14c-1 1.500 0 2.800 3.500 2.800 2 0 4-.8 5-2l-1 3c-2 1-4 1.500-6 1-3-.8-4-3-3-5z" fill="#f9e3ee" /><path d="M8 13c0 4 3 7.500 8 7.500 2 0 4-.8 5.500-2.500-2 4-6 6-9.500 6-5 0-8-4-8-8 0-3 2-6 6-7-1.500 1-2 2.500-2 4z" fill="#1470c8" /></svg></AppSlot>
        <AppSlot $mark="dot"><svg width="24" height="24" viewBox="0 0 24 24"><circle cx="12" cy="12" r="11" fill="#000" /><FaSpotify size={24} color="#1ed760" /></svg></AppSlot>
        <AppSlot $mark="dot"><svg width="24" height="24" viewBox="0 0 24 24"><path d="M0 2.500a1 1 0 0 1 1-1h7l2.500 2.500H0z" fill="#dd9a0b" /><path d="M0 5h9.500l1.500-2h12a1 1 0 0 1 1 1v18.500H0z" fill="#fbcb3d" /><path d="M4 23v-5a1.500 1.500 0 0 1 1.500-1.500h13A1.500 1.500 0 0 1 20 18v5z" fill="#0f6dc0" /><path d="M8 20h8v1.500H8z" fill="#084f90" /></svg></AppSlot>
        <AppSlot $mark="bar"><svg width="24" height="24" viewBox="0 0 24 24"><circle cx="12" cy="12" r="12" fill="#fbc116" /><path d="M12 12L1.600 6A12 12 0 0 1 22.400 6z" fill="#e33b2e" /><path d="M1.600 6A12 12 0 0 0 12 24l5-9-5 2-5-3z" fill="#1e9c4c" /><circle cx="12" cy="12" r="5.800" fill="#fff" /><circle cx="12" cy="12" r="4.500" fill="#2b7de9" /></svg><AppBadge>O</AppBadge></AppSlot>
        <AppSlot><svg width="24" height="24" viewBox="0 0 24 24" fill="none" stroke="#fa2e55"><circle cx="12" cy="12" r="11.300" strokeWidth="1.200" /><circle cx="12" cy="12" r="9.300" strokeWidth=".8" /><ellipse cx="12" cy="12" rx="5.800" ry="10" strokeWidth="1.400" /><path d="M13 4c5 3 5 13 0 16" /></svg></AppSlot>
        <AppSlot $mark="dot"><svg width="24" height="24" viewBox="0 0 24 24"><path d="M0 24l2-6.500A12 12 0 1 1 6.500 22z" fill="#fff" /><path d="M2 22l1.500-5A10 10 0 1 1 7 20.600z" fill="#38c053" /><path d="M8 6.500c1-.8 1.500-.5 2 1 .5 1.200.4 1.500-.5 2.500 1 2 2.300 3.200 4.300 4 1-1.500 1.300-1.500 2.500-.9 1.700.8 1.700 1 1 2.400-.9 1.500-3 1.800-5.300.6C9.500 14.700 7.500 12.500 6.700 10c-.4-1.500.2-2.700 1.300-3.500z" fill="#fff" /></svg></AppSlot>
        <AppSlot $mark="dot"><svg width="24" height="24" viewBox="0 0 24 24"><circle cx="12" cy="12" r="12" fill="#5865f2" /><g transform="translate(4.500 4.500)"><FaDiscord size={15} color="#fff" /></g></svg></AppSlot>
        <AppSlot $mark="dot"><svg width="24" height="24" viewBox="0 0 24 24"><path d="M3 2h18v19H3z" fill="#4bbfdd" /><path d="M5.500 0v3M8.500 0v3M11.500 0v3M14.500 0v3M17.500 0v3" stroke="#155a78" strokeWidth="1.300" /><path d="M6 7.500h12M6 11.500h12M6 15.500h12" stroke="#14607f" strokeWidth="1.700" /><path d="M3 20h18v1.500H3z" fill="#f3eee8" /><path d="M3 22h18v2H3z" fill="#9a5417" /></svg></AppSlot>
      </Apps>
      <Tray>
        <TrayIcon $w={32}><svg width="12" height="8" viewBox="0 0 12 8"><path d="M1 6.500l5-5 5 5" fill="none" stroke="#222" strokeWidth="1.400" /></svg></TrayIcon>
        <TrayIcon $w={32}><svg width="17" height="12" viewBox="0 0 17 12"><path d="M4.500 11a3.500 3.500 0 0 1-.3-7A5 5 0 0 1 13 5a3 3 0 0 1 0 6z" fill="#777" stroke="#222" strokeWidth="1.200" /><path d="M3 11c1-5 7-6 11-2l-1 2z" fill="#eee" /></svg></TrayIcon>
        <TrayIcon $w={32}><svg width="14" height="18" viewBox="0 0 14 18" fill="none" stroke="#2357a8" strokeWidth="1.300"><rect x="4.500" y="1" width="5" height="10" rx="2.500" fill="#a9c4ea" /><path d="M1.500 8a5.500 5.500 0 0 0 11 0M7 13.500V17" /></svg></TrayIcon>
        <TrayIcon $w={32}><svg width="16" height="13" viewBox="0 0 16 13" fill="none" stroke="#222" strokeWidth="1.200"><path d="M1 5a10 10 0 0 1 14 0M3 7.500a7 7 0 0 1 10 0M5.200 9.800a4 4 0 0 1 5.600 0" /><circle cx="8" cy="11.500" r=".8" fill="#222" /></svg></TrayIcon>
        <TrayIcon $w={16}><svg width="16" height="14" viewBox="0 0 16 14" fill="none" stroke="#222" strokeWidth="1.100"><path d="M1 5h2.500L7 1.500v11L3.500 9H1zM9.500 5a3 3 0 0 1 0 4M11.500 3a6 6 0 0 1 0 8M13.500 1.500a8.500 8.500 0 0 1 0 11" /></svg></TrayIcon>
        <TrayIcon $w={32}><svg width="17" height="14" viewBox="0 0 17 14"><rect x="3" y="3" width="11.500" height="9.500" rx="1.500" fill="none" stroke="#222" strokeWidth="1.200" /><path d="M5 5h8v6H5zM15 6h1.500v3H15z" fill="#222" /><path d="M3.500 0L.5 5h2L1.500 9 5.500 3.500h-2z" fill="#222" stroke="#f6e3f6" strokeWidth=".4" /></svg></TrayIcon>
        <Spacer />
        <Stack $right><Fit w={29}>16:08</Fit><Fit w={58}>23.06.2023</Fit></Stack>
        <Count>1</Count>
      </Tray>
    </Taskbar>
  );
}

export default function App() {
  return (
    <Screen>
      <Global />
      <BrowserChrome />
      <Main><SlideView /><Sidebar /></Main>
      <TaskbarView />
      <Notice><Fit w={185}>Windows'u Etkinleştir</Fit><NoticeSub><Fit w={298}>Windows'u etkinleştirmek için Ayarlar'a gidin.</Fit></NoticeSub></Notice>
    </Screen>
  );
}
